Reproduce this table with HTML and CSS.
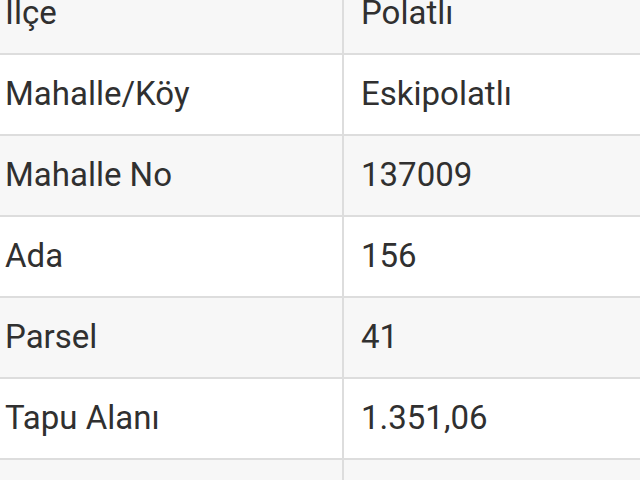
FILE: index.html
```html
<!DOCTYPE html>
<html lang="tr">
<head>
<meta charset="utf-8">
<link rel="stylesheet" href="styles.css">
</head>
<body>
<div class="table">
  <div class="row alt"><div class="key">İlçe</div><div class="val">Polatlı</div></div>
  <div class="row"><div class="key">Mahalle/Köy</div><div class="val">Eskipolatlı</div></div>
  <div class="row alt"><div class="key">Mahalle No</div><div class="val">137009</div></div>
  <div class="row"><div class="key">Ada</div><div class="val">156</div></div>
  <div class="row alt"><div class="key">Parsel</div><div class="val">41</div></div>
  <div class="row"><div class="key">Tapu Alanı</div><div class="val">1.351,06</div></div>
  <div class="row alt"><div class="key">&nbsp;</div><div class="val">&nbsp;</div></div>
</div>
</body>
</html>
```
FILE: styles.css
```css
html, body {
  margin: 0;
  padding: 0;
  background: #ffffff;
  overflow: hidden;
}
.table {
  margin-top: -26px;
  font-family: Roboto, "Noto Sans", sans-serif;
  font-size: 33px;
  color: #303030;
}
.row {
  display: grid;
  grid-template-columns: 344px 1fr;
  height: 79px;
  border-bottom: 2px solid #dddddd;
  background: #ffffff;
}
.row.alt {
  background: #f7f7f7;
}
.key, .val {
  display: flex;
  align-items: center;
  white-space: nowrap;
  padding-bottom: 3px;
}
.key {
  padding-left: 5px;
  border-right: 2px solid #dddddd;
}
.val {
  padding-left: 17px;
}
```
